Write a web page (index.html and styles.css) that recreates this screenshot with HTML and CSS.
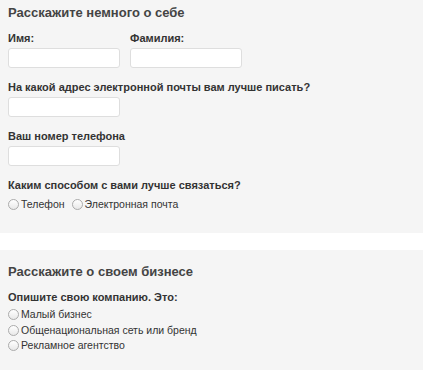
FILE: index.html
```html
<!DOCTYPE html>
<html lang="ru">
<head>
<meta charset="utf-8">
<title>Форма</title>
<link rel="stylesheet" href="styles.css">
</head>
<body>
<form class="form">
  <section class="panel panel-first">
    <h2 class="panel-title">Расскажите немного о себе</h2>
    <div class="row">
      <div class="field field-first">
        <label class="label" for="fname">Имя:</label>
        <input class="input" id="fname" type="text">
      </div>
      <div class="field field-first">
        <label class="label" for="lname">Фамилия:</label>
        <input class="input" id="lname" type="text">
      </div>
    </div>
    <div class="field">
      <label class="label" for="email">На какой адрес электронной почты вам лучше писать?</label>
      <input class="input" id="email" type="text">
    </div>
    <div class="field">
      <label class="label" for="phone">Ваш номер телефона</label>
      <input class="input" id="phone" type="text">
    </div>
    <div class="field">
      <div class="label">Каким способом с вами лучше связаться?</div>
      <div class="choices choices-inline">
        <label class="choice"><input class="radio" type="radio" name="contact">Телефон</label>
        <label class="choice"><input class="radio" type="radio" name="contact">Электронная почта</label>
      </div>
    </div>
  </section>
  <section class="panel panel-second">
    <h2 class="panel-title">Расскажите о своем бизнесе</h2>
    <div class="field field-first">
      <div class="label">Опишите свою компанию. Это:</div>
      <div class="choices choices-stack">
        <label class="choice"><input class="radio" type="radio" name="biz">Малый бизнес</label>
        <label class="choice"><input class="radio" type="radio" name="biz">Общенациональная сеть или бренд</label>
        <label class="choice"><input class="radio" type="radio" name="biz">Рекламное агентство</label>
      </div>
    </div>
  </section>
</form>
</body>
</html>
```
FILE: styles.css
```css
html, body {
  margin: 0;
  padding: 0;
  background: #ffffff;
}

body {
  font-family: "Liberation Sans", Arial, Helvetica, sans-serif;
  color: #333333;
}

.form {
  display: flex;
  flex-direction: column;
  gap: 17px;
}

.panel {
  background: #f5f5f5;
  padding: 0 8px;
}

.panel-first {
  padding-top: 4px;
  padding-bottom: 22px;
}

.panel-second {
  padding-top: 13px;
  padding-bottom: 30px;
}

.panel-title {
  margin: 0 0 11px;
  font-size: 13px;
  line-height: 17px;
  font-weight: bold;
  color: #444444;
}

.row {
  display: flex;
  gap: 10px;
}

.field {
  display: flex;
  flex-direction: column;
  align-items: flex-start;
  margin-top: 13px;
}

.field-first {
  margin-top: 0;
}

.label {
  font-size: 11px;
  line-height: 13px;
  font-weight: bold;
  color: #333333;
  margin-bottom: 3px;
}

.input {
  box-sizing: border-box;
  width: 112px;
  height: 20px;
  margin: 0;
  padding: 2px 4px;
  border: 1px solid #dedede;
  border-radius: 3px;
  background: #ffffff;
  font: 11px "Liberation Sans", Arial, sans-serif;
}

.choices {
  display: flex;
}

.choices-inline {
  margin-top: 3px;
  flex-direction: row;
  gap: 7px;
}

.choices-stack {
  margin-top: 0;
  flex-direction: column;
}

.choice {
  display: flex;
  align-items: center;
  gap: 2px;
  font-size: 10.5px;
  line-height: 15.5px;
  color: #333333;
}

.choices-inline .choice {
  line-height: 13px;
}

.radio {
  -webkit-appearance: none;
  appearance: none;
  box-sizing: border-box;
  width: 11px;
  height: 11px;
  margin: 0;
  border: 1px solid #ababab;
  border-radius: 50%;
  background: linear-gradient(#ffffff, #e8e8e8);
}
```
